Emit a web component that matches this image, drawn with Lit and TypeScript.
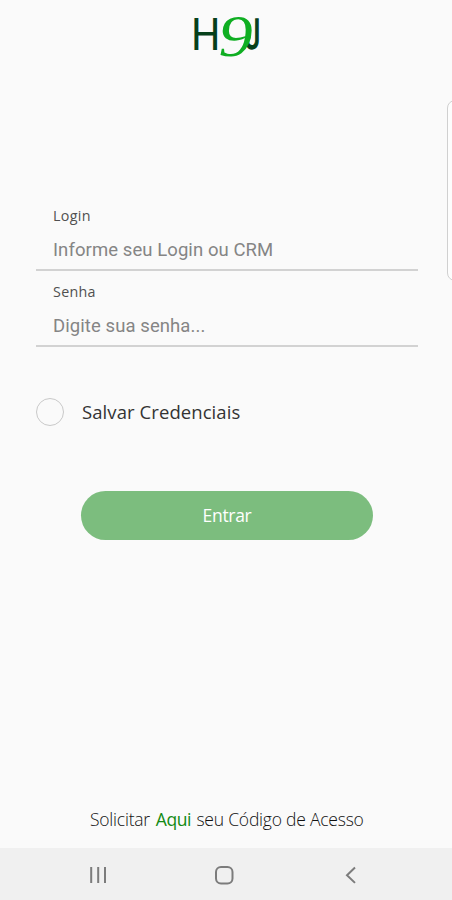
import { LitElement, html, css } from "lit";
import { customElement, property } from "lit/decorators.js";

@customElement("brand-logo")
class BrandLogo extends LitElement {
  static styles = css`
    :host { display: block; width: 72px; height: 48px; }
    svg { display: block; overflow: visible; }
    .letter { font: 400 43.5px Roboto, sans-serif; fill: #06401a; }
    .bold { stroke: #06401a; stroke-width: 1.5; }
    .nine { font: italic 400 59px "Liberation Serif", serif; fill: #0fae22; }
  `;
  render() {
    return html`<svg width="72" height="48" viewBox="0 0 72 48" role="img" aria-label="H9J">
      <text class="letter" transform="translate(0 38.5) scale(.95 1)">H</text>
      <text class="letter bold" transform="translate(54 38) scale(.64 .98)">J</text>
      <text class="nine" transform="translate(27.5 44.5) scale(1.16 1)">9</text>
    </svg>`;
  }
}

@customElement("login-field")
class LoginField extends LitElement {
  @property() label = "";
  @property() hint = "";
  static styles = css`
    :host { display: flex; flex-direction: column; height: 76px; box-sizing: border-box; padding-left: 17px; border-bottom: 2px solid #d2d2d2; }
    .label { font: 400 14.3px/20px "Open Sans", sans-serif; letter-spacing: 0.3px; color: #505050; padding-top: 10.5px; }
    .hint { font: 400 18.5px/24px Roboto, sans-serif; letter-spacing: 0.08px; color: #858585; padding-top: 12px; white-space: nowrap; }
  `;
  render() {
    return html`<div class="label">${this.label}</div><div class="hint">${this.hint}</div>`;
  }
}

@customElement("app-root")
class AppRoot extends LitElement {
  static styles = css`
    :host { display: flex; flex-direction: column; position: relative; box-sizing: border-box; width: 452px; height: 900px; overflow: hidden; background: #fafafa; font-family: "Open Sans", sans-serif; }
    .logo { margin: 11px 0 0 191px; }
    .fields { margin: 136px 34px 0 36px; }
    .save { display: flex; align-items: center; gap: 18px; height: 30px; margin: 50px 0 0 36px; font-size: 18.5px; letter-spacing: 0.08px; color: #333; }
    .save-text { padding-bottom: 2px; }
    .radio { box-sizing: border-box; width: 28px; height: 28px; border: 1.5px solid #c9c9c9; border-radius: 50%; }
    .enter { display: flex; align-items: center; justify-content: center; width: 292px; height: 49px; margin: 64px 0 0 81px; padding: 0 0 1px; border: 0; border-radius: 25px; background: #7cbd7e; color: #fff; font: 400 17.5px "Open Sans", sans-serif; letter-spacing: -0.3px; }
    .request { margin: auto 0 16px 90px; font: 300 17.5px/26px "Open Sans", sans-serif; letter-spacing: -0.22px; color: #111; white-space: nowrap; }
    .link { color: #138a13; font-weight: 400; letter-spacing: -0.4px; margin: 0 1px 0 1.5px; }
    .nav { height: 52px; background: #f0f0f0; flex: none; }
    .nav svg { display: block; fill: none; stroke: #7c7c7c; stroke-width: 2; }
    .edge { position: absolute; left: 447px; top: 100px; width: 20px; height: 181px; box-sizing: border-box; border: 1.5px solid #d0d0d0; border-radius: 8px; background: #fdfdfd; }
  `;
  render() {
    return html`
      <brand-logo class="logo"></brand-logo>
      <div class="fields">
        <login-field label="Login" hint="Informe seu Login ou CRM"></login-field>
        <login-field label="Senha" hint="Digite sua senha..."></login-field>
      </div>
      <div class="save"><span class="radio"></span><span class="save-text">Salvar Credenciais</span></div>
      <button class="enter">Entrar</button>
      <div class="request">Solicitar <span class="link">Aqui</span> seu Código de Acesso</div>
      <div class="nav">
        <svg width="452" height="52" viewBox="0 0 452 52">
          <path d="M91.2 19v16M98.2 19v16M105 19v16" />
          <rect x="216" y="19" width="16.5" height="16.5" rx="5" />
          <path d="M355 19.5l-8 7.7 8 7.7" />
        </svg>
      </div>
      <div class="edge"></div>
    `;
  }
}
